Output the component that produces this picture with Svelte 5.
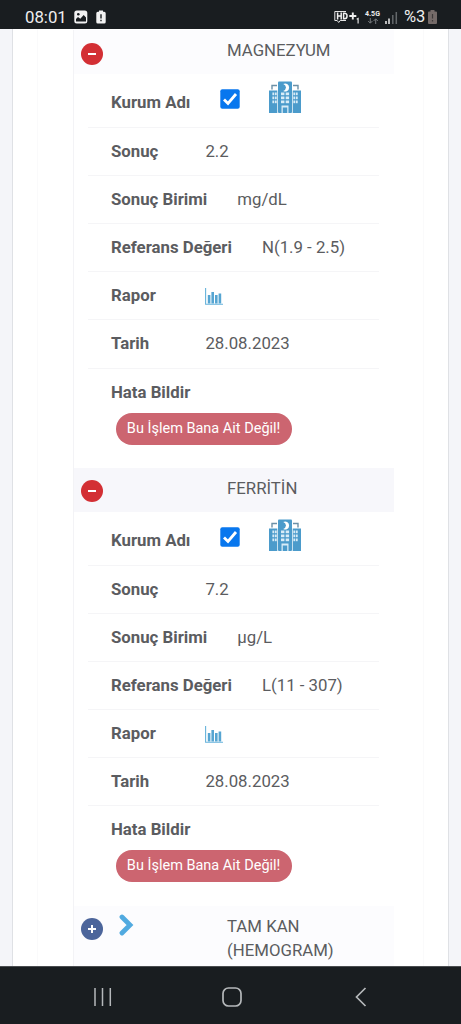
<script lang="ts">
  type Test = { name: string; result: string; unit: string; reference: string; date: string };

  const tests: Test[] = [
    { name: 'MAGNEZYUM', result: '2.2', unit: 'mg/dL', reference: 'N(1.9 - 2.5)', date: '28.08.2023' },
    { name: 'FERRİTİN', result: '7.2', unit: 'µg/L', reference: 'L(11 - 307)', date: '28.08.2023' }
  ];

  const windows = [11.5, 15.5, 19.5];
</script>

{#snippet hospital()}
  <svg class="hospital" width="32" height="32" viewBox="0 0 32 32">
    <g fill="#4b9bcb">
      <rect x="9" y="0.5" width="14" height="31.5" rx="1" />
      <rect x="0" y="9.5" width="8.3" height="22.5" />
      <rect x="23.7" y="9.5" width="8.3" height="22.5" />
    </g>
    <path d="M3 8.5V4.5H8M29 8.5V4.5H24" fill="none" stroke="#6c91a8" stroke-width="1.4" />
    <path d="M14.2 3a4 4 0 1 1 0 7a4.200 4.200 0 0 0 2.800-3.500a4.200 4.200 0 0 0-2.800-3.500z" fill="#fff" />
    <g fill="#d8ecf7">
      {#each windows as y}
        <rect x="12" {y} width="3.4" height="2.7" />
        <rect x="16.7" {y} width="3.4" height="2.7" />
        <rect x="3.4" {y} width="1.8" height="2.7" />
        <rect x="5.9" {y} width="1.8" height="2.7" />
        <rect x="24.4" {y} width="1.8" height="2.7" />
        <rect x="26.9" {y} width="1.8" height="2.7" />
      {/each}
      <path d="M12.5 24.5h7V32h-1.3v-5.5h-4.4V32h-1.3z" />
    </g>
  </svg>
{/snippet}

<div class="screen">
  <header class="status">
    <span class="clock">08:01</span>
    <svg class="photo" width="14" height="14" viewBox="0 0 14 14">
      <rect x="0.3" y="0.5" width="13" height="13" rx="2.5" fill="#f2f2f2" />
      <circle cx="4.3" cy="4.3" r="1.3" fill="#191d20" />
      <path d="M2 11.5V9l2-2 2.3 1.8L9.7 5 12 7.5v4z" fill="#191d20" />
    </svg>
    <svg class="alert" width="10" height="14" viewBox="0 0 10 14">
      <path d="M3 .5h4v1.3h1.2A1.5 1.5 0 0 1 9.7 3.3v8.7a1.5 1.5 0 0 1-1.5 1.5H1.8A1.5 1.5 0 0 1 .3 12V3.3A1.5 1.5 0 0 1 1.8 1.8H3z" fill="#f2f2f2" />
      <path d="M5 4.3V8.5M5 9.8v1.5" stroke="#191d20" stroke-width="1.4" />
    </svg>
    <div class="signals">
      <svg width="26" height="15" viewBox="0 0 26 15">
        <path d="M4 1.5H.8v9h2.4l1.5 2 1.5-2H12M4 1.5h8" fill="none" stroke="#e4e4e4" stroke-width="1" />
        <path d="M3.6 2.5v7M7.2 2.5v7M3.6 6h3.6M9.6 3.2v5.6h.9c3.4 0 3.4-5.6 0-5.6z" fill="none" stroke="#f0f0f0" stroke-width="1.5" />
        <path d="M15.3 6h7M18.8 2.5v7" stroke="#f0f0f0" stroke-width="1.9" />
        <path d="M22.7 9.3l1.4-.8v5" fill="none" stroke="#e4e4e4" stroke-width="1.2" />
      </svg>
      <div class="network">
        <b>4.5G</b>
        <svg width="12" height="6" viewBox="0 0 12 6">
          <path d="M3.3 0v5M1.2 3l2.1 2.2L5.4 3M8.7 6V1M6.6 3l2.1-2.2L10.8 3" fill="none" stroke="#777b7e" />
        </svg>
      </div>
      <svg class="bars" width="13" height="13" viewBox="0 0 13 13">
        <path d="M1 10v3M4 7.5V13" stroke="#eee" stroke-width="1.5" />
        <path d="M7.8 4v9M11.3 1v12" stroke="#63676a" stroke-width="1.5" />
      </svg>
      <span class="percent">%3</span>
      <svg class="battery" width="9" height="14" viewBox="0 0 9 14">
        <path d="M2.5 0h4v1.5H8a1 1 0 0 1 1 1V13a1 1 0 0 1-1 1H1a1 1 0 0 1-1-1V2.5a1 1 0 0 1 1-1h1.5z" fill="#756b69" />
        <path d="M4.5 4v4.5M4.5 10v1.5" stroke="#3e3a3a" stroke-width="1.2" />
      </svg>
    </div>
  </header>

  <main>
    <div class="card">
      <div class="panel">
        <div class="table">
          {#each tests as test, i}
            <section>
              <div class="heading" class:striped={i % 2 === 1}>
                <button class="toggle open" aria-label="Kapat"></button>
                <span class="name">{test.name}</span>
              </div>
              <ul>
                <li class="institution">
                  <b>Kurum Adı</b>
                  <svg class="check" width="20" height="20" viewBox="0 0 20 20">
                    <rect x="0.3" y="0.3" width="19.4" height="19.4" rx="2" fill="#0877ee" />
                    <path d="M4 10.4l4 4L16 5" fill="none" stroke="#fff" stroke-width="2.8" />
                  </svg>
                  {@render hospital()}
                </li>
                <li><b>Sonuç</b><span>{test.result}</span></li>
                <li><b>Sonuç Birimi</b><span>{test.unit}</span></li>
                <li><b>Referans Değeri</b><span>{test.reference}</span></li>
                <li>
                  <b>Rapor</b>
                  <svg class="chart" width="18" height="17" viewBox="0 0 18 17">
                    <path d="M.6 0v16.3H18" fill="none" stroke="#67b3db" stroke-width="1.1" />
                    <path d="M4.1 7V15.5M7.7 4v11.5M11.3 7v8.5M14.9 5.5V15.5" stroke="#56a5d2" stroke-width="2.6" />
                  </svg>
                </li>
                <li><b>Tarih</b><span>{test.date}</span></li>
                <li class="report">
                  <b>Hata Bildir</b>
                  <button class="pill">Bu İşlem Bana Ait Değil!</button>
                </li>
              </ul>
            </section>
          {/each}

          <div class="heading closed">
            <button class="toggle" aria-label="Aç"></button>
            <svg class="chevron" width="16" height="22" viewBox="0 0 16 22">
              <path d="M3 3L11 11 3 19" fill="none" stroke="#51aae0" stroke-width="4.8" stroke-linecap="round" />
            </svg>
            <span class="name">TAM KAN<br />(HEMOGRAM)</span>
          </div>
        </div>
      </div>
    </div>
  </main>

  <nav>
    <svg width="20" height="20" viewBox="0 0 20 20">
      <path d="M2 1v18M9.5 1v18M17.3 1v18" stroke="#b5b8ba" stroke-width="1.5" />
    </svg>
    <svg width="20" height="20" viewBox="0 0 20 20">
      <rect x="1" y="1" width="18" height="18" rx="5.5" fill="none" stroke="#b5b8ba" stroke-width="1.7" />
    </svg>
    <svg width="20" height="20" viewBox="0 0 20 20">
      <path d="M14.5 1L5.5 10l9 9" fill="none" stroke="#b5b8ba" stroke-width="1.7" />
    </svg>
  </nav>
</div>

<style>
  :global(body) { margin: 0; }
  .screen {
    display: flex;
    flex-direction: column;
    height: 1024px;
    overflow: hidden;
    background: #f4f5f9;
    color: #5b5c60;
    font: 16.8px/24px Roboto, sans-serif;
  }
  svg { display: block; flex: none; }
  button { border: 0; padding: 0; font: inherit; }

  .status {
    flex: none;
    box-sizing: border-box;
    height: 29px;
    padding: 5px 24px 0 25px;
    display: flex;
    align-items: center;
    background: #191d20;
    color: #eee;
  }
  .clock { width: 49px; }
  .alert { margin-left: 8px; }
  .signals { margin-left: auto; display: flex; align-items: center; }
  .network { width: 17px; margin-left: 4px; display: flex; flex-direction: column; align-items: center; font-size: 7px; line-height: 7px; }
  .bars { margin-left: 4px; }
  .percent { width: 20px; margin: 0 4px 0 6px; font-size: 16.5px; }

  main { flex: 1; min-height: 0; overflow: hidden; padding: 0 12px; }
  .card { box-sizing: border-box; height: 100%; padding: 0 24px; background: #fff; border: solid #dfe1e5; border-width: 0 1px; }
  .panel { box-sizing: border-box; height: 100%; padding: 1px 29px 0 36px; border: solid #fafafb; border-width: 0 1px; }
  .table { box-shadow: -1px 0 #f3f3f6; }

  .heading {
    box-sizing: border-box;
    height: 44px;
    padding: 8px 0 0 6.6px;
    display: flex;
    align-items: flex-start;
    background: #fcfcfe;
  }
  .striped { background: #f7f7fb; }
  .closed { height: 62px; }
  .name { margin-left: auto; width: 167px; }
  .toggle {
    flex: none;
    display: grid;
    place-content: center;
    place-items: center;
    width: 22px;
    height: 22px;
    margin-top: 4.5px;
    border-radius: 50%;
    background: #4c659b;
  }
  .toggle::before, .toggle::after { content: ''; grid-area: 1 / 1; width: 8px; height: 2px; background: #fff; }
  .toggle::after { width: 2px; height: 8px; }
  .toggle.open { background: #d32f34; }
  .toggle.open::after { display: none; }
  .chevron { margin: 0.5px 0 0 16.4px; }

  ul { list-style: none; margin: 0; padding: 0 15px 0 14px; }
  li {
    box-sizing: border-box;
    height: 48.2px;
    padding: 11px 0 0 23px;
    display: flex;
    align-items: flex-start;
    gap: 30px;
    border-bottom: 1px solid #f5f5f7;
  }
  li b { min-width: 64.4px; }
  .institution { height: 53.6px; padding-top: 16px; }
  .check { margin-top: -1px; }
  .hospital { margin: -9px 0 0 -1px; }
  .chart { margin-top: 5px; }
  .report { height: 99.4px; flex-direction: column; gap: 9px; border: 0; }
  .pill {
    width: 176px;
    height: 32px;
    margin-left: 4.6px;
    border-radius: 16px;
    background: #cc6570;
    color: #fff;
    font-size: 14.5px;
  }

  nav {
    flex: none;
    box-sizing: border-box;
    height: 58px;
    padding: 2px 90px 0 92.5px;
    display: flex;
    align-items: center;
    justify-content: space-between;
    background: #191d20;
    border-top: 1px solid #4a4d50;
  }
</style>
